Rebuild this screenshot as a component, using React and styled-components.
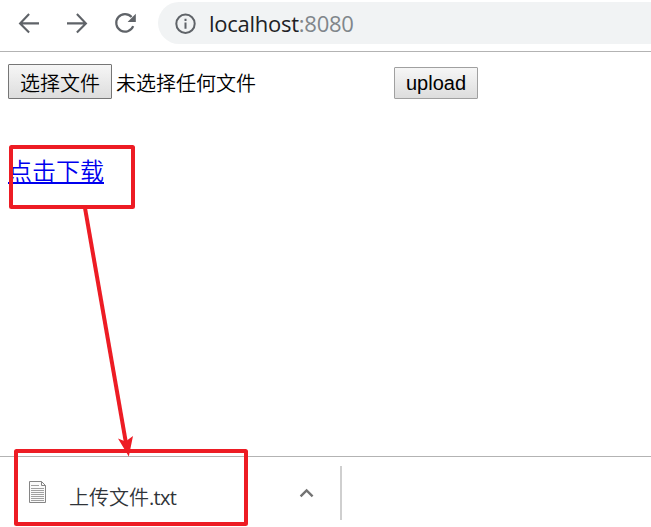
import React from "react";
import styled, { createGlobalStyle } from "styled-components";

const GlobalStyle = createGlobalStyle`
  * { box-sizing: border-box; }
  body { margin: 0; background: #fff; overflow: hidden; }
`;

const Browser = styled.div`
  position: relative;
  display: flex;
  flex-direction: column;
  width: 651px;
  height: 527px;
  overflow: hidden;
  background: #fff;
  font-family: "Liberation Sans", "Noto Sans CJK SC", sans-serif;
  white-space: nowrap;
`;

const Toolbar = styled.header`
  display: flex;
  flex: none;
  height: 52px;
  padding: 2px 0 7px 17px;
  border-bottom: 1px solid #b3b3b3;
`;

const NavButton = styled.button`
  display: flex;
  width: 24px;
  height: 24px;
  margin: 9px 24px 0 0;
  padding: 0;
  border: 0;
  background: none;
  color: #5f6368;
`;

const AddressBar = styled.div`
  display: flex;
  flex: 1;
  align-items: center;
  height: 42px;
  margin-left: -3px;
  padding-left: 15px;
  border-radius: 21px 0 0 21px;
  background: #f1f3f4;
  color: #5f6368;
`;

const Address = styled.span`
  margin: 0 0 0 12px;
  color: #202124;
  font: 22px/30px "Open Sans", "Noto Sans", sans-serif;
  letter-spacing: -0.26px;
`;

const Port = styled.span`
  color: #80868b;
`;

const Page = styled.main`
  flex: 1;
  padding: 12px 8px 0;
`;

const UploadForm = styled.form`
  display: flex;
  align-items: flex-end;
  height: 35px;
`;

const FormButton = styled.button`
  width: ${(p) => p.$width}px;
  height: ${(p) => p.$height}px;
  padding: ${(p) => p.$top}px 0 0;
  border: 1px solid ${(p) => p.$border};
  border-radius: 1px;
  background: linear-gradient(#f6f6f6, #dddddd);
  color: #000;
  font: 350 20px/28px "Liberation Sans", "Noto Sans CJK SC", sans-serif;
`;

const FileStatus = styled.span`
  width: 278px;
  margin: 0 0 1px 4px;
  color: #000;
  font: 350 20px/30px "Noto Sans CJK SC", sans-serif;
`;

const DownloadLink = styled.a`
  display: block;
  width: 96px;
  height: 31px;
  margin-top: 54px;
  color: #0000ee;
  font: 350 24px/33px "Noto Sans CJK SC", sans-serif;
  text-decoration: none;
  border-bottom: 2px solid #0000ee;
`;

const Shelf = styled.footer`
  display: flex;
  flex: none;
  height: 71px;
  border-top: 1px solid #b3b3b3;
`;

const DownloadItem = styled.div`
  display: flex;
  align-items: center;
  width: 342px;
  height: 54px;
  margin-top: 9px;
  padding-left: 28px;
  border-right: 2px solid #cfcfcf;
  color: #5f6368;
`;

const FileName = styled.span`
  width: 230px;
  margin: 8px 0 0 22px;
  color: #303439;
  font: 350 20px/30px "Noto Sans CJK SC", sans-serif;
`;

const Extension = styled.span`
  font: 20px/30px "Open Sans", "Noto Sans", sans-serif;
  letter-spacing: -0.7px;
`;

const Annotations = styled.svg`
  position: absolute;
  inset: 0;
  pointer-events: none;
`;

const BackIcon = () => (
  <svg width="24" height="24" fill="none" stroke="currentColor" strokeWidth="2.1">
    <path d="M22 12.4H3.6M12.1 3.1 3.1 12.4 12.1 21.4" />
  </svg>
);

const ForwardIcon = () => (
  <svg width="24" height="24" fill="none" stroke="currentColor" strokeWidth="2.1">
    <path d="M2 12.4H20.4M11.9 3.1 20.9 12.4 11.9 21.4" />
  </svg>
);

const ReloadIcon = () => (
  <svg width="24" height="24" fill="none">
    <path d="M18.6 6A8.8 8.8 0 1 0 20.2 15.2" stroke="currentColor" strokeWidth="2.2" />
    <path d="M22.8 2.8V11H14.6Z" fill="currentColor" />
  </svg>
);

const InfoIcon = () => (
  <svg width="24" height="24" fill="none" stroke="currentColor" strokeWidth="2">
    <circle cx="12.5" cy="12.8" r="9.2" />
    <path d="M12.5 11.5V17.8M12.5 7.8V10" />
  </svg>
);

const FileIcon = () => (
  <svg width="19" height="24" fill="none" stroke="#858585">
    <path d="M1.5 0.5H13.5L17.5 4.5V21.5H1.5Z" fill="#fafafa" />
    <path d="M13.5 0.5V4.5H17.5" />
    <path d="M3 4.5H11M3 7.5H16M3 9.5H16M3 11.5H16M3 13.5H16M3 15.5H16M3 17.5H16M3 19.5H16" stroke="#a0a0a0" />
  </svg>
);

const ChevronIcon = () => (
  <svg width="16" height="12" fill="none" stroke="#737373" strokeWidth="2.4">
    <path d="M1.6 9.4 7.6 3.5 13.6 9.4" />
  </svg>
);

export default function App() {
  return (
    <Browser>
      <GlobalStyle />
      <Toolbar>
        <NavButton aria-label="Back"><BackIcon /></NavButton>
        <NavButton aria-label="Forward"><ForwardIcon /></NavButton>
        <NavButton aria-label="Reload"><ReloadIcon /></NavButton>
        <AddressBar>
          <InfoIcon />
          <Address>localhost<Port>:8080</Port></Address>
        </AddressBar>
      </Toolbar>
      <Page>
        <UploadForm>
          <FormButton type="button" $width={104} $height={35} $top={5} $border="#767676">选择文件</FormButton>
          <FileStatus>未选择任何文件</FileStatus>
          <FormButton type="button" $width={84} $height={32} $top={0} $border="#a0a0a0">upload</FormButton>
        </UploadForm>
        <DownloadLink href="#">点击下载</DownloadLink>
      </Page>
      <Shelf>
        <DownloadItem>
          <FileIcon />
          <FileName>上传文件<Extension>.txt</Extension></FileName>
          <ChevronIcon />
        </DownloadItem>
      </Shelf>
      <Annotations width="651" height="527" fill="none" stroke="#ed1c24" strokeWidth="4">
        <rect x="11" y="147" width="122" height="60" rx="0.5" />
        <rect x="16" y="451" width="230" height="73" rx="0.5" />
        <path d="M85 208 125.8 442" />
        <path d="M128.8 456.5 118 438.5 125.5 441.5 133 436Z" fill="#ed1c24" stroke="none" />
      </Annotations>
    </Browser>
  );
}
